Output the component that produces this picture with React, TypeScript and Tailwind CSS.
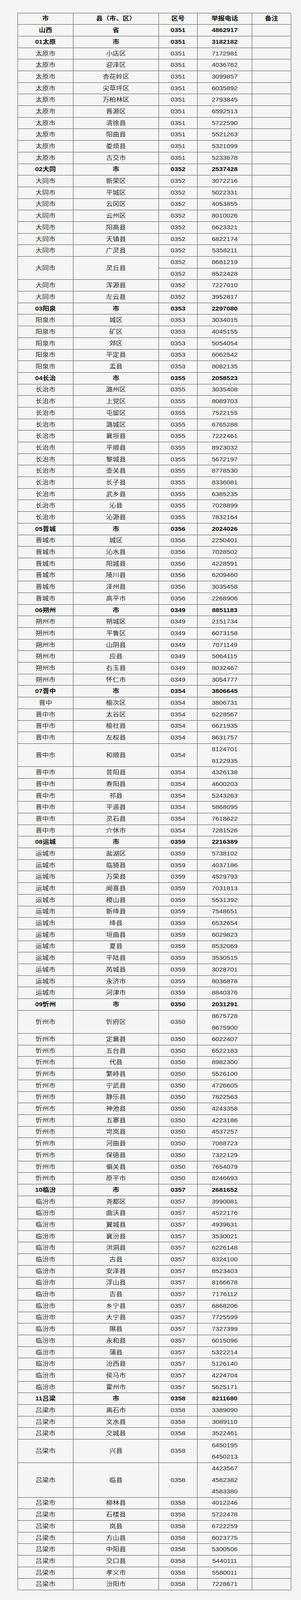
import React from "react";

type Item = [string, string | string[], string?];
type Group = { head: string; code: string; phone: string; city: string; split?: string; items: Item[] };

const groups: Group[] = [
  {
    head: "01太原",
    code: "0351",
    phone: "3182182",
    city: "太原市",
    items: [
      ["小店区", "7172981"],
      ["迎泽区", "4036762"],
      ["杏花岭区", "3099857"],
      ["尖草坪区", "6035892"],
      ["万柏林区", "2793845"],
      ["晋源区", "6592513"],
      ["清徐县", "5722590"],
      ["阳曲县", "5521263"],
      ["娄烦县", "5321099"],
      ["古交市", "5233678"],
    ],
  },
  {
    head: "02大同",
    code: "0352",
    phone: "2537428",
    city: "大同市",
    split: "灵丘县",
    items: [
      ["新荣区", "3072216"],
      ["平城区", "5022331"],
      ["云冈区", "4053855"],
      ["云州区", "8010026"],
      ["阳高县", "6623321"],
      ["天镇县", "6822174"],
      ["广灵县", "5358211"],
      ["灵丘县", ["8681219", "8522428"]],
      ["浑源县", "7227010"],
      ["左云县", "3952817"],
    ],
  },
  {
    head: "03阳泉",
    code: "0353",
    phone: "2297080",
    city: "阳泉市",
    items: [
      ["城区", "3034015"],
      ["矿区", "4045155"],
      ["郊区", "5054054"],
      ["平定县", "6062542"],
      ["盂县", "8082135"],
    ],
  },
  {
    head: "04长治",
    code: "0355",
    phone: "2058523",
    city: "长治市",
    items: [
      ["潞州区", "3035408"],
      ["上党区", "8089703"],
      ["屯留区", "7522155"],
      ["潞城区", "6765288"],
      ["襄垣县", "7222461"],
      ["平顺县", "8923032"],
      ["黎城县", "5672197"],
      ["壶关县", "8778530"],
      ["长子县", "8336081"],
      ["武乡县", "6385235"],
      ["沁县", "7028899"],
      ["沁源县", "7832164"],
    ],
  },
  {
    head: "05晋城",
    code: "0356",
    phone: "2024026",
    city: "晋城市",
    items: [
      ["城区", "2250401"],
      ["沁水县", "7028502"],
      ["阳城县", "4228591"],
      ["陵川县", "6209460"],
      ["泽州县", "3035458"],
      ["高平市", "2268906"],
    ],
  },
  {
    head: "06朔州",
    code: "0349",
    phone: "8851183",
    city: "朔州市",
    items: [
      ["朔城区", "2151734"],
      ["平鲁区", "6073158"],
      ["山阴县", "7071149"],
      ["应县", "5064115"],
      ["右玉县", "8032467"],
      ["怀仁市", "3054777"],
    ],
  },
  {
    head: "07晋中",
    code: "0354",
    phone: "3806645",
    city: "晋中市",
    items: [
      ["榆次区", "3806731", "晋中"],
      ["太谷区", "6228567"],
      ["榆社县", "6621935"],
      ["左权县", "8631757"],
      ["和顺县", ["8124701", "8122935"]],
      ["昔阳县", "4326138"],
      ["寿阳县", "4600203"],
      ["祁县", "5243263"],
      ["平遥县", "5868095"],
      ["灵石县", "7618622"],
      ["介休市", "7281526"],
    ],
  },
  {
    head: "08运城",
    code: "0359",
    phone: "2216389",
    city: "运城市",
    items: [
      ["盐湖区", "5738102"],
      ["临猗县", "4037186"],
      ["万荣县", "4529793"],
      ["闻喜县", "7031813"],
      ["稷山县", "5531392"],
      ["新绛县", "7548651"],
      ["绛县", "6532654"],
      ["垣曲县", "6029823"],
      ["夏县", "8532069"],
      ["平陆县", "3530515"],
      ["芮城县", "3028701"],
      ["永济市", "8036878"],
      ["河津市", "8840376"],
    ],
  },
  {
    head: "09忻州",
    code: "0350",
    phone: "2031291",
    city: "忻州市",
    items: [
      ["忻府区", ["8675728", "8675900"]],
      ["定襄县", "6022407"],
      ["五台县", "6522183"],
      ["代县", "8982300"],
      ["繁峙县", "5526100"],
      ["宁武县", "4726605"],
      ["静乐县", "7822563"],
      ["神池县", "4243358"],
      ["五寨县", "4223186"],
      ["岢岚县", "4537257"],
      ["河曲县", "7088723"],
      ["保德县", "7322129"],
      ["偏关县", "7654079"],
      ["原平市", "8246693"],
    ],
  },
  {
    head: "10临汾",
    code: "0357",
    phone: "2681652",
    city: "临汾市",
    items: [
      ["尧都区", "3990081"],
      ["曲沃县", "4522176"],
      ["翼城县", "4939631"],
      ["襄汾县", "3530021"],
      ["洪洞县", "6226148"],
      ["古县", "8324100"],
      ["安泽县", "8523403"],
      ["浮山县", "8166678"],
      ["吉县", "7176112"],
      ["乡宁县", "6868206"],
      ["大宁县", "7725599"],
      ["隰县", "7327399"],
      ["永和县", "6015096"],
      ["蒲县", "5322214"],
      ["汾西县", "5126140"],
      ["侯马市", "4224704"],
      ["霍州市", "5625171"],
    ],
  },
  {
    head: "11吕梁",
    code: "0358",
    phone: "8211680",
    city: "吕梁市",
    items: [
      ["离石市", "3389090"],
      ["文水县", "3089110"],
      ["交城县", "3522461"],
      ["兴县", ["6450195", "6450213"]],
      ["临县", ["4423567", "4582382", "4583380"]],
      ["柳林县", "4012246"],
      ["石楼县", "5722478"],
      ["岚县", "6722259"],
      ["方山县", "6023775"],
      ["中阳县", "5300506"],
      ["交口县", "5440111"],
      ["孝义市", "5580011"],
      ["汾阳市", "7228671"],
    ],
  },
];

const heights: Record<number, string> = {
  1: "h-[29.69px]",
  2: "h-[59.38px]",
  3: "h-[89.07px]",
};

const rowCls = "grid grid-cols-[142px_219px_99px_140px_100px] border-b border-[#4d4d4d]";
const cellCls = "flex items-center justify-center border-r border-[#4d4d4d]";

function T({ children }: { children: React.ReactNode }) {
  return <span className="inline-block scale-y-[0.84]">{children}</span>;
}

function Row({ cells, bold }: { cells: string[]; bold?: boolean }) {
  return (
    <div className={`${rowCls} ${heights[1]} ${bold ? "font-bold text-[#111]" : "text-[#2b2b2b]"}`}>
      {cells.map((c, i) => (
        <div key={i} className={cellCls}>
          {c && <T>{c}</T>}
        </div>
      ))}
    </div>
  );
}

function MultiRow({ city, county, code, phones }: { city: string; county: string; code: string; phones: string[] }) {
  return (
    <div className={`${rowCls} ${heights[phones.length]} text-[#2b2b2b]`}>
      <div className={cellCls}>
        <T>{city}</T>
      </div>
      <div className={cellCls}>
        <T>{county}</T>
      </div>
      <div className={cellCls}>
        <T>{code}</T>
      </div>
      <div className="flex flex-col border-r border-[#4d4d4d]">
        {phones.map((p) => (
          <div key={p} className={`${heights[1]} flex items-center justify-center`}>
            <T>{p}</T>
          </div>
        ))}
      </div>
      <div className={cellCls}></div>
    </div>
  );
}

// 灵丘县: two sub rows in 区号 / 电话 / 备注, sharing 市 and 县
function SplitRow({ city, county, code, phones }: { city: string; county: string; code: string; phones: string[] }) {
  const sub = (content: string[]) => (
    <div className="flex flex-col border-r border-[#4d4d4d]">
      {content.map((c, i) => (
        <div
          key={i}
          className={`${heights[1]} flex items-center justify-center ${i < content.length - 1 ? "border-b border-[#4d4d4d]" : ""}`}
        >
          {c && <T>{c}</T>}
        </div>
      ))}
    </div>
  );
  return (
    <div className={`${rowCls} ${heights[2]} text-[#2b2b2b]`}>
      <div className={cellCls}>
        <T>{city}</T>
      </div>
      <div className={cellCls}>
        <T>{county}</T>
      </div>
      {sub(phones.map(() => code))}
      {sub(phones)}
      {sub(phones.map(() => ""))}
    </div>
  );
}

export default function App() {
  return (
    <div className="min-h-screen bg-[#f4f5f4] pt-[32.6px] pl-[45px] font-['Liberation_Sans','Noto_Sans_CJK_SC',sans-serif] text-[17px] leading-none">
      <div className="w-[700px] border-l border-t border-[#4d4d4d]">
        <Row bold cells={["市", "县（市、区）", "区号", "举报电话", "备注"]} />
        <Row bold cells={["山西", "省", "0351", "4862917", ""]} />
        {groups.map((g) => (
          <React.Fragment key={g.head}>
            <Row bold cells={[g.head, "市", g.code, g.phone, ""]} />
            {g.items.map(([county, phone, cityName]) => {
              const city = cityName ?? g.city;
              if (Array.isArray(phone)) {
                return g.split === county ? (
                  <SplitRow key={county} city={city} county={county} code={g.code} phones={phone} />
                ) : (
                  <MultiRow key={county} city={city} county={county} code={g.code} phones={phone} />
                );
              }
              return <Row key={county} cells={[city, county, g.code, phone, ""]} />;
            })}
          </React.Fragment>
        ))}
      </div>
    </div>
  );
}
